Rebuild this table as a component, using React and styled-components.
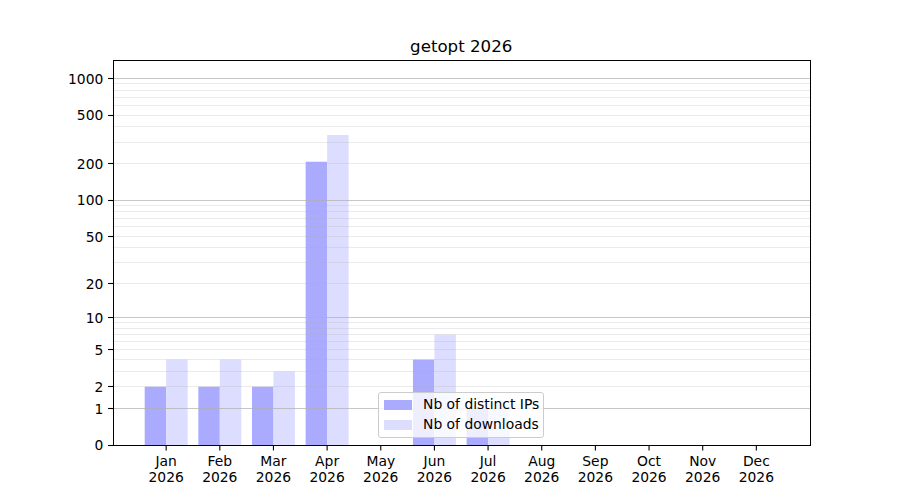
import React from 'react'
import styled, { createGlobalStyle } from 'styled-components'

const GlobalStyle = createGlobalStyle`
    body {
        margin: 0;
        background: #ffffff;
    }
`

const Figure = styled.div`
    width: 900px;
    height: 500px;
    display: flex;
    flex-direction: column;
    background: #ffffff;
    font-family: "DejaVu Sans", "Liberation Sans", sans-serif;
    color: #000000;
    overflow: hidden;
`

const Title = styled.div`
    box-sizing: border-box;
    margin-left: 112.5px;
    width: 697.5px;
    height: 60px;
    padding-top: 36.5px;
    text-align: center;
    font-size: 16.67px;
    line-height: normal;
`

const PlotArea = styled.div`
    position: relative;
    height: 440px;
`

const ChartSvg = styled.svg`
    display: block;
`

const Bar = styled.rect`
    fill: ${p => p.$color};
`

const GridLine = styled.line`
    stroke: #b0b0b0;
    stroke-width: 1;
    opacity: ${p => (p.$major ? 0.7 : 0.25)};
`

const TickMark = styled.line`
    stroke: #000000;
    stroke-width: 1.1;
`

const Spine = styled.rect`
    fill: none;
    stroke: #000000;
    stroke-width: 1;
`

const TickLabel = styled.text`
    font-family: "DejaVu Sans", "Liberation Sans", sans-serif;
    font-size: 13.89px;
    fill: #000000;
`

const Legend = styled.div`
    position: absolute;
    left: 378px;
    top: 332px;
    box-sizing: border-box;
    width: 166px;
    height: 46px;
    padding: 5px 5px 6px 5px;
    display: flex;
    flex-direction: column;
    gap: 7px;
    background: rgba(255, 255, 255, 0.8);
    border: 1px solid #cccccc;
    border-radius: 3px;
`

const LegendRow = styled.div`
    display: flex;
    align-items: center;
    height: 13px;
`

const Swatch = styled.span`
    width: 28px;
    height: 10px;
    margin-right: 11px;
    flex-shrink: 0;
    background: ${p => p.$color};
`

const LegendLabel = styled.span`
    font-size: 13.89px;
    line-height: 13px;
    white-space: nowrap;
`

const IP_COLOR = '#aaaaff'
const DL_COLOR = '#ddddff'

const months = ['Jan', 'Feb', 'Mar', 'Apr', 'May', 'Jun', 'Jul', 'Aug', 'Sep', 'Oct', 'Nov', 'Dec']
const distinctIps = [2, 2, 2, 207, 0, 4, 1, 0, 0, 0, 0, 0]
const downloads = [4, 4, 3, 343, 0, 7, 1, 0, 0, 0, 0, 0]

const X0 = 112.5
const X1 = 810
const UNIT = (X1 - X0) / 13
const BOTTOM = 385
const DECADE = 122.2
const BAR_W = 0.4 * UNIT

const xOf = i => X0 + (i + 1) * UNIT
const yOf = v => BOTTOM - DECADE * Math.log10(v + 1)

const yTicks = [0, 1, 2, 5, 10, 20, 50, 100, 200, 500, 1000]
const majorGrid = [1, 10, 100, 1000]
const minorGrid = [1, 10, 100].flatMap(d => [2, 3, 4, 5, 6, 7, 8, 9].map(m => m * d))

const snap = y => Math.floor(y) + 0.5

const App = () => {
    return (
        <>
            <GlobalStyle />
            <Figure>
                <Title>getopt 2026</Title>
                <PlotArea>
                    <ChartSvg width="900" height="440" viewBox="0 0 900 440">
                        {months.map((m, i) => (
                            <g key={m}>
                                {distinctIps[i] > 0 && (
                                    <Bar
                                        $color={IP_COLOR}
                                        x={xOf(i) - BAR_W}
                                        y={yOf(distinctIps[i])}
                                        width={BAR_W}
                                        height={BOTTOM - yOf(distinctIps[i])}
                                    />
                                )}
                                {downloads[i] > 0 && (
                                    <Bar
                                        $color={DL_COLOR}
                                        x={xOf(i)}
                                        y={yOf(downloads[i])}
                                        width={BAR_W}
                                        height={BOTTOM - yOf(downloads[i])}
                                    />
                                )}
                            </g>
                        ))}
                        {minorGrid.map(v => (
                            <GridLine key={'n' + v} x1={X0} x2={X1} y1={snap(yOf(v))} y2={snap(yOf(v))} />
                        ))}
                        {majorGrid.map(v => (
                            <GridLine key={'j' + v} $major x1={X0} x2={X1} y1={snap(yOf(v))} y2={snap(yOf(v))} />
                        ))}
                        <Spine x="113.5" y="0.5" width="697" height="385" />
                        {yTicks.map(v => (
                            <g key={'y' + v}>
                                <TickMark x1="113" x2="108.1" y1={snap(yOf(v))} y2={snap(yOf(v))} />
                                <TickLabel x="103.3" y={yOf(v) + 5.3} textAnchor="end">
                                    {v}
                                </TickLabel>
                            </g>
                        ))}
                        {months.map((m, i) => (
                            <g key={'x' + m}>
                                <TickMark x1={xOf(i)} x2={xOf(i)} y1="386" y2="390.4" />
                                <TickLabel textAnchor="middle">
                                    <tspan x={xOf(i)} y="406">{m}</tspan>
                                    <tspan x={xOf(i)} y="422.3">2026</tspan>
                                </TickLabel>
                            </g>
                        ))}
                    </ChartSvg>
                    <Legend>
                        <LegendRow>
                            <Swatch $color={IP_COLOR} />
                            <LegendLabel>Nb of distinct IPs</LegendLabel>
                        </LegendRow>
                        <LegendRow>
                            <Swatch $color={DL_COLOR} />
                            <LegendLabel>Nb of downloads</LegendLabel>
                        </LegendRow>
                    </Legend>
                </PlotArea>
            </Figure>
        </>
    )
}

export default App
